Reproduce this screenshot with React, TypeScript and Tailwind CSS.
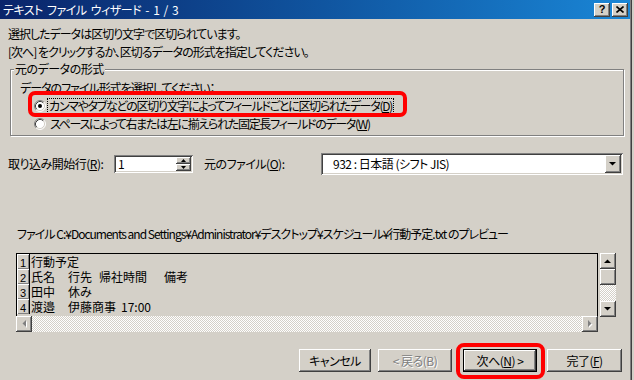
import React from "react";

const RAISED =
  "shadow-[inset_-1px_-1px_0_#404040,inset_1px_1px_0_#ffffff,inset_-2px_-2px_0_#808080,inset_2px_2px_0_#d4d0c8]";
const SUNKEN =
  "shadow-[inset_1px_1px_0_#808080,inset_-1px_-1px_0_#ffffff,inset_2px_2px_0_#404040,inset_-2px_-2px_0_#d4d0c8]";
const DITHER =
  "bg-[repeating-conic-gradient(#ffffff_0%_25%,#d4d0c8_0%_50%)] bg-[length:2px_2px]";

function Radio({ checked }: { checked?: boolean }) {
  return (
    <svg width="12" height="12" viewBox="0 0 12 12" className="shrink-0">
      <circle cx="6" cy="6" r="5" fill="#ffffff" />
      <path d="M2.11 9.89 A5.5 5.5 0 0 1 9.89 2.11" fill="none" stroke="#808080" strokeWidth="1" />
      <path d="M2.11 9.89 A5.5 5.5 0 0 0 9.89 2.11" fill="none" stroke="#ffffff" strokeWidth="1" />
      <path d="M2.82 9.18 A4.5 4.5 0 0 1 9.18 2.82" fill="none" stroke="#404040" strokeWidth="1" />
      <path d="M2.82 9.18 A4.5 4.5 0 0 0 9.18 2.82" fill="none" stroke="#d4d0c8" strokeWidth="1" />
      {checked && <circle cx="6" cy="6" r="2" fill="#000000" />}
    </svg>
  );
}

function Arrow({ dir, color = "#000000", disabled }: { dir: "up" | "down" | "left" | "right"; color?: string; disabled?: boolean }) {
  const pts: Record<string, string> = {
    up: "0,4 7,4 3.5,0.5",
    down: "0,0 7,0 3.5,3.5",
    left: "4,0 4,7 0.5,3.5",
    right: "0,0 0,7 3.5,3.5",
  };
  const vertical = dir === "up" || dir === "down";
  const w = vertical ? 7 : 4;
  const h = vertical ? 4 : 7;
  return (
    <svg width={w + 1} height={h + 1} viewBox={`0 0 ${w + 1} ${h + 1}`}>
      {disabled && <polygon points={pts[dir]} fill="#ffffff" transform="translate(1,1)" />}
      <polygon points={pts[dir]} fill={disabled ? "#808080" : color} />
    </svg>
  );
}

function ScrollBtn({ dir, disabled }: { dir: "up" | "down" | "left" | "right"; disabled?: boolean }) {
  return (
    <div className={`w-[16px] h-[16px] bg-[#d4d0c8] ${RAISED} flex items-center justify-center shrink-0`}>
      <Arrow dir={dir} disabled={disabled} />
    </div>
  );
}

function RowNum({ n }: { n: number }) {
  return (
    <div className="w-[13px] h-[15px] bg-[#d4d0c8] border-r border-black shadow-[inset_1px_1px_0_#ffffff,inset_-1px_-1px_0_#808080] flex items-end justify-center shrink-0 text-[11px] leading-[12px] font-['Liberation_Sans',sans-serif]">
      {n}
    </div>
  );
}

export default function App() {
  return (
    <div className="w-[634px] h-[380px] overflow-hidden flex bg-[#d4d0c8] text-black text-[12px] leading-[14px] font-['Noto_Sans_CJK_JP',sans-serif] [font-feature-settings:'palt']">
      <div className="w-[630px] h-full flex flex-col bg-[#d4d0c8]">
        {/* Title bar */}
        <div className="h-[19px] flex items-center bg-linear-to-r from-[#0a246a] to-[#1a86d6] pl-[3px] pr-[2px] shrink-0">
          <span className="flex-1 text-white text-[12px] leading-[14px] tracking-[-0.5px] [word-spacing:2px]">テキスト ファイル ウィザード - 1 / 3</span>
          <div className="flex gap-[2px]">
            <div className={`w-[16px] h-[14px] bg-[#d4d0c8] ${RAISED} flex items-center justify-center text-[11px] font-bold leading-none font-['Liberation_Sans',sans-serif]`}>
              ?
            </div>
            <div className={`w-[16px] h-[14px] bg-[#d4d0c8] ${RAISED} flex items-center justify-center`}>
              <svg width="8" height="7" viewBox="0 0 8 7">
                <path d="M0.5 0.5 L7.5 6.5 M7.5 0.5 L0.5 6.5" stroke="#000000" strokeWidth="1.6" />
              </svg>
            </div>
          </div>
        </div>

        {/* Body */}
        <div className="flex flex-col px-[8px]">
          <p className="mt-[8px] h-[14px] tracking-[-1px]">選択したデータは区切り文字で区切られています。</p>
          <p className="mt-[4px] h-[14px] tracking-[-1px]">[次へ] をクリックするか、区切るデータの形式を指定してください。</p>

          {/* Group box */}
          <div className="relative mt-[10px] ml-[2px] w-[614px] h-[67px] border border-[#808080] shadow-[1px_1px_0_#ffffff,inset_1px_1px_0_#ffffff] pt-[11px]">
            <span className="absolute left-[3px] top-[-8px] bg-[#d4d0c8] px-[1px] tracking-[-0.5px]">元のデータの形式</span>
            <p className="pl-[9px] h-[14px] tracking-[-1px]">データのファイル形式を選択してください：</p>
            <div className="relative mt-[2px] h-[18px] flex items-center pl-[23px]">
              <span className="absolute left-[17px] top-[-6px] w-[379px] h-[26px] border-[4px] border-[#ff0000] rounded-[7px]" />
              <Radio checked />
              <span className="ml-[2px] px-[1px] outline-1 outline-dotted outline-black tracking-[-1.3px]">
                カンマやタブなどの区切り文字によってフィールドごとに区切られたデータ(<u>D</u>)
              </span>
            </div>
            <div className="h-[18px] flex items-center pl-[23px]">
              <Radio />
              <span className="ml-[4px] tracking-[-1.3px]">スペースによって右または左に揃えられた固定長フィールドのデータ(<u>W</u>)</span>
            </div>
          </div>

          {/* Start row / origin */}
          <div className="mt-[17px] h-[22px] flex items-center">
            <span className="w-[106px] shrink-0 tracking-[-0.5px]">取り込み開始行(<u>R</u>):</span>
            <div className={`w-[79px] h-[18px] bg-white ${SUNKEN} p-[2px] flex shrink-0`}>
              <span className="flex-1 pl-[2px] leading-[14px]">1</span>
              <div className="w-[15px] flex flex-col">
                <div className={`h-[7px] bg-[#d4d0c8] ${RAISED} flex items-center justify-center`}>
                  <svg width="5" height="3" viewBox="0 0 5 3"><polygon points="0,3 5,3 2.5,0" fill="#000000" /></svg>
                </div>
                <div className={`h-[7px] bg-[#d4d0c8] ${RAISED} flex items-center justify-center`}>
                  <svg width="5" height="3" viewBox="0 0 5 3"><polygon points="0,0 5,0 2.5,3" fill="#000000" /></svg>
                </div>
              </div>
            </div>
            <span className="ml-[11px] w-[117px] shrink-0 tracking-[-0.5px]">元のファイル(<u>O</u>):</span>
            <div className={`w-[302px] h-[22px] bg-white ${SUNKEN} p-[2px] flex items-stretch shrink-0`}>
              <span className="flex-1 pl-[10px] leading-[18px] tracking-[-0.5px]">932 : 日本語 (シフト JIS)</span>
              <div className={`w-[16px] bg-[#d4d0c8] ${RAISED} flex items-center justify-center`}>
                <Arrow dir="down" />
              </div>
            </div>
          </div>

          {/* File path */}
          <p className="mt-[52px] ml-[9px] h-[14px] whitespace-nowrap tracking-[-1px]">
            ファイル C:¥Documents and Settings¥Administrator¥デスクトップ¥スケジュール¥行動予定.txt のプレビュー
          </p>

          {/* Preview */}
          <div className="mt-[12px] ml-[8px] flex items-start">
            <div className="w-[582px] flex flex-col">
              <div className="h-[63px] border-t border-l border-r border-black overflow-hidden bg-[#d4d0c8] [font-feature-settings:normal] leading-[15px]">
                <div className="h-[15px] flex items-center">
                  <RowNum n={1} />
                  <span className="ml-[1px]">行動予定</span>
                </div>
                <div className="h-[15px] flex items-center">
                  <RowNum n={2} />
                  <span className="ml-[1px] w-[37px]">氏名</span>
                  <span className="w-[31px]">行先</span>
                  <span className="w-[65px]">帰社時間</span>
                  <span>備考</span>
                </div>
                <div className="h-[15px] flex items-center">
                  <RowNum n={3} />
                  <span className="ml-[1px] w-[37px]">田中</span>
                  <span>休み</span>
                </div>
                <div className="h-[17px] flex items-start">
                  <RowNum n={4} />
                  <span className="ml-[1px] w-[37px]">渡邉</span>
                  <span className="w-[53px]">伊藤商事</span>
                  <span>17:00</span>
                </div>
              </div>
              <div className={`h-[16px] flex ${DITHER}`}>
                <ScrollBtn dir="left" disabled />
                <div className="flex-1" />
                <ScrollBtn dir="right" disabled />
              </div>
            </div>
            <div className={`ml-[2px] w-[16px] h-[64px] flex flex-col ${DITHER}`}>
              <ScrollBtn dir="up" />
              <div className={`h-[16px] bg-[#d4d0c8] ${RAISED}`} />
              <div className="flex-1" />
              <ScrollBtn dir="down" />
            </div>
          </div>

          {/* Buttons */}
          <div className="mt-[17px] flex justify-end tracking-[-0.5px]">
            <div className={`w-[72px] h-[23px] bg-[#d4d0c8] ${RAISED} flex items-center justify-center`}>キャンセル</div>
            <div className={`ml-[7px] w-[74px] h-[23px] bg-[#d4d0c8] ${RAISED} flex items-center justify-center text-[#808080] [text-shadow:1px_1px_0_#ffffff]`}>
              &lt; 戻る(B)
            </div>
            <div className="relative ml-[11px]">
              <span className="absolute left-[-7px] top-[-6px] w-[89px] h-[36px] border-[4px] border-[#ff0000] rounded-[8px]" />
              <div className="w-[74px] h-[23px] border border-black">
                <div className={`w-full h-full bg-[#d4d0c8] ${RAISED} flex items-center justify-center`}>
                  次へ(<u>N</u>) &gt;
                </div>
              </div>
            </div>
            <div className={`ml-[10px] w-[75px] h-[23px] bg-[#d4d0c8] ${RAISED} flex items-center justify-center`}>
              完了(<u>F</u>)
            </div>
          </div>
        </div>
      </div>
      <div className="w-px h-full bg-[#808080]" />
      <div className="w-px h-full bg-[#404040]" />
      <div className="w-[2px] h-full bg-[#d4d0c8]" />
    </div>
  );
}
